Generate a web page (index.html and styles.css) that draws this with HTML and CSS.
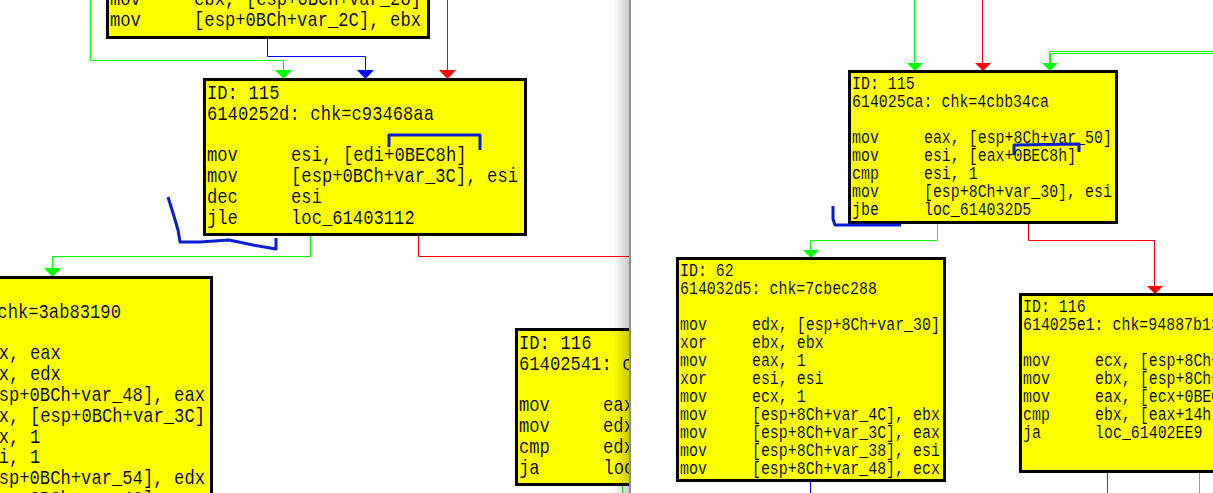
FILE: index.html
```html
<!DOCTYPE html>
<html>
<head>
<meta charset="utf-8">
<title>Graph comparison</title>
<link rel="stylesheet" href="styles.css">
</head>
<body>
<main class="split">
<section class="pane left-pane">
<svg class="edges" width="629" height="493">
<polyline class="e green" points="90.5,0 90.5,60.5 283.5,60.5 283.5,70"/>
<polygon class="green-f" points="275,70 292,70 283.5,79"/>
<polyline class="e blue" points="267.5,38 267.5,56.5 365.5,56.5 365.5,70"/>
<polygon class="blue-f" points="357,70 374,70 365.5,79"/>
<polyline class="e red" points="447.5,0 447.5,70"/>
<polygon class="red-f" points="439,70 456,70 447.5,79"/>
<polyline class="e green" points="310.5,235 310.5,256.5 52.5,256.5 52.5,268"/>
<polygon class="green-f" points="44,268 61,268 52.5,277"/>
<polyline class="e red" points="418.5,235 418.5,256.5 629,256.5"/>
<polyline class="e green" points="622.5,485 622.5,493"/>
</svg>
<div class="node big n-top"><pre class="code">mov     ebx, [esp+0BCh+var_28]
mov     [esp+0BCh+var_2C], ebx</pre></div>
<div class="node big n-l115"><pre class="code">ID: 115
6140252d: chk=c93468aa

mov     esi, [edi+0BEC8h]
mov     [esp+0BCh+var_3C], esi
dec     esi
jle     loc_61403112</pre></div>
<div class="node big n-l62"><pre class="code">ID: 62
614032d5: chk=3ab83190

mov     eax, eax
mov     ebx, edx
mov     [esp+0BCh+var_48], eax
mov     ecx, [esp+0BCh+var_3C]
mov     ecx, 1
mov     esi, 1
mov     [esp+0BCh+var_54], edx
mov     [esp+0BCh+var_48], eax</pre></div>
<div class="node big n-l116"><pre class="code">ID: 116
61402541: chk=5e0c11aa

mov     eax, [esp+0BCh+var_54]
mov     edx, [eax+0BEC8h]
cmp     edx, [eax+14h]
ja      loc_61402EE9</pre></div>
<svg class="ink" width="629" height="493">
<polyline class="s" points="389,147 389,135 480,135 480,150"/>
<polyline class="s" points="168,197 173,213 178,230 180,242 200,242 229,240 253,245 276,249 276,238"/>
</svg>
<div class="shade"></div>
</section>
<div class="divider"></div>
<section class="pane right-pane">
<svg class="edges" width="582" height="493">
<polyline class="e green" points="283.5,0 283.5,63"/>
<polygon class="green-f" points="276,63 292,63 284,71"/>
<polyline class="e red" points="351.5,0 351.5,63"/>
<polygon class="red-f" points="344,63 360,63 352,71"/>
<polyline class="e green" points="418.5,63 418.5,51.5 582,51.5"/>
<polyline class="e green" points="419.5,63 419.5,53.5 582,53.5"/>
<polygon class="green-f" points="411,63 427,63 419,71"/>
<polyline class="e green" points="306.5,223 306.5,240.5 179.5,240.5 179.5,250"/>
<polygon class="green-f" points="172,250 188,250 180,258"/>
<polyline class="e red" points="397.5,223 397.5,240.5 523.5,240.5 523.5,286"/>
<polygon class="red-f" points="516,286 532,286 524,294"/>
<polyline class="e blue" points="179.5,481 179.5,493"/>
<polyline class="e red" points="476.5,472 476.5,493"/>
<polyline class="e green" points="568.5,472 568.5,493"/>
</svg>
<div class="node small n-r115"><pre class="code">ID: 115
614025ca: chk=4cbb34ca

mov     eax, [esp+8Ch+var_50]
mov     esi, [eax+0BEC8h]
cmp     esi, 1
mov     [esp+8Ch+var_30], esi
jbe     loc_614032D5</pre></div>
<div class="node small n-r62"><pre class="code">ID: 62
614032d5: chk=7cbec288

mov     edx, [esp+8Ch+var_30]
xor     ebx, ebx
mov     eax, 1
xor     esi, esi
mov     ecx, 1
mov     [esp+8Ch+var_4C], ebx
mov     [esp+8Ch+var_3C], eax
mov     [esp+8Ch+var_38], esi
mov     [esp+8Ch+var_48], ecx</pre></div>
<div class="node small n-r116"><pre class="code">ID: 116
614025e1: chk=94887b13

mov     ecx, [esp+8Ch+var_30]
mov     ebx, [esp+8Ch+var_3C]
mov     eax, [ecx+0BEC8h]
cmp     ebx, [eax+14h]
ja      loc_61402EE9</pre></div>
<svg class="ink" width="582" height="493">
<polyline class="s thin" points="383,155 383,145 448,144 448,152"/>
<polyline class="s thin" points="202,206 202,219 204,225 270,225"/>
</svg>
</section>
</main>
</body>
</html>
```
FILE: styles.css
```css
html, body {
  margin: 0;
  padding: 0;
  background: #fff;
  overflow: hidden;
}
.split {
  display: flex;
  width: 1213px;
  height: 493px;
}
.pane {
  position: relative;
  height: 493px;
  overflow: hidden;
  background: #fff;
}
.left-pane { width: 629px; flex: none; }
.right-pane { flex: 1; }
.divider {
  width: 2px;
  flex: none;
  background: #8d8f98;
}
.shade {
  position: absolute;
  right: 0;
  top: 0;
  width: 16px;
  height: 493px;
  z-index: 3;
  background: linear-gradient(to right, rgba(0, 0, 0, 0), rgba(0, 0, 0, 0.2));
}
.edges, .ink {
  position: absolute;
  left: 0;
  top: 0;
}
.ink { z-index: 2; }
.e { fill: none; stroke-width: 1; }
.e.green { stroke: #00ff00; }
.e.blue { stroke: #0000ff; }
.e.red { stroke: #ff0000; }
.green-f { fill: #00ff00; }
.blue-f { fill: #0000ff; }
.red-f { fill: #ff0000; }
.s {
  fill: none;
  stroke: #0a1ed2;
  stroke-width: 3;
  stroke-linejoin: round;
}
.s.thin { stroke-width: 3; }
.node {
  position: absolute;
  box-sizing: border-box;
  background: #ffff00;
  border: 3px solid #000;
  overflow: hidden;
}
.code {
  margin: 0;
  color: #000;
  font-family: "Liberation Mono", monospace;
  white-space: pre;
  width: 125%;
  transform-origin: left top;
  -webkit-text-stroke: 0.1px #ffff00;
}
.big { padding: 3px 0 0 1px; }
.big .code {
  font-size: 21px;
  line-height: 20.8px;
  word-spacing: 0.4px;
  transform: scaleX(0.8175);
}
.small { padding: 2px 0 0 1px; }
.small .code {
  font-size: 18px;
  line-height: 18px;
  word-spacing: 0.1px;
  transform: scaleX(0.828);
}
.n-top { left: 106px; top: -16px; width: 324px; height: 55px; }
.n-l115 { left: 203px; top: 78px; width: 324px; height: 158px; }
.n-l62 { left: -110px; top: 276px; width: 323px; height: 240px; }
.n-l116 { left: 515px; top: 328px; width: 324px; height: 158px; }
.n-r115 { left: 217px; top: 70px; width: 270px; height: 154px; }
.n-r62 { left: 45px; top: 257px; width: 270px; height: 225px; }
.n-r116 { left: 388px; top: 293px; width: 270px; height: 180px; }
```
